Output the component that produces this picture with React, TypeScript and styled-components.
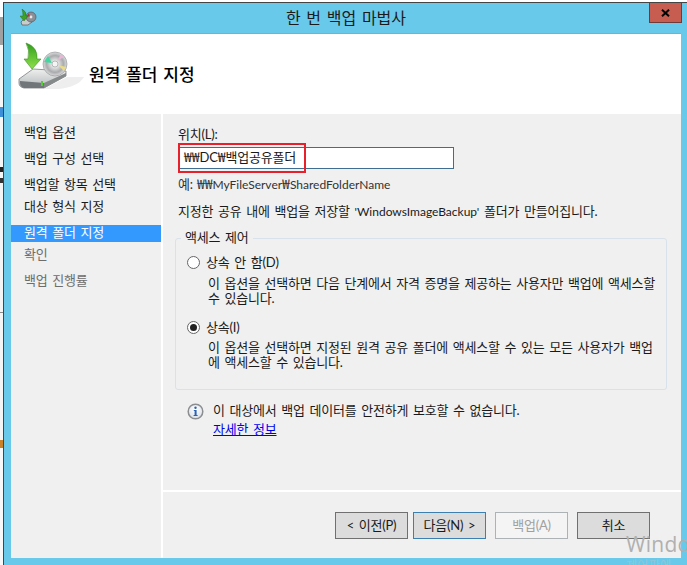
import * as React from 'react';
import styled, { createGlobalStyle } from 'styled-components';

const GlobalStyle = createGlobalStyle`
  html, body {
    margin: 0;
    padding: 0;
    background: #fff;
  }
  * { box-sizing: border-box; }
`;

const NAV_ITEMS = [
  { label: '백업 옵션', gap: 0 },
  { label: '백업 구성 선택', gap: 9 },
  { label: '백업할 항목 선택', gap: 9 },
  { label: '대상 형식 지정', gap: 5 },
  { label: '원격 폴더 지정', gap: 9, active: true },
  { label: '확인', gap: 5, muted: true },
  { label: '백업 진행률', gap: 9, muted: true },
];

const DiskIcon = () => (
  <svg width="68" height="52" viewBox="0 0 68 52">
    <defs>
      <linearGradient id="disk-top" x1="0" y1="0" x2="0" y2="1">
        <stop offset="0" stopColor="#eef0f0" />
        <stop offset="1" stopColor="#b4b8b8" />
      </linearGradient>
      <linearGradient id="arrow" x1="0" y1="0" x2="0" y2="1">
        <stop offset="0" stopColor="#2f9e1c" />
        <stop offset="1" stopColor="#8fe04a" />
      </linearGradient>
      <radialGradient id="cd" cx="0.5" cy="0.5" r="0.5">
        <stop offset="0.2" stopColor="#f0f0f0" />
        <stop offset="0.7" stopColor="#a9abad" />
        <stop offset="1" stopColor="#dcdcde" />
      </radialGradient>
    </defs>
    <path d="M26 48 L49 36 H66 Q60 46 40 48 Z" fill="#eeeeee" />
    <path d="M1 38 L15 28 L48 30 V35 L26 47 H6 Q1 46 1 42 Z" fill="url(#disk-top)" stroke="#7b7f80" strokeWidth="0.8" />
    <path d="M2 40 L26 42 V47 H6 Q2 46 2 42 Z" fill="#70767a" />
    <path d="M26 42 L48 32 V35 L26 47 Z" fill="#85898a" />
    <rect x="23" y="40" width="2" height="5" fill="#52d030" />
    <circle cx="37" cy="23" r="12" fill="url(#cd)" stroke="#8c8e90" strokeWidth="0.6" />
    <path d="M26 21 L34 22 L30 15 Z" fill="#3fd9a0" />
    <path d="M40 24 L48 26 L46 30 Z" fill="#eadb8a" />
    <path d="M39 20 L46 16 L43 13 Z" fill="#e6b8d6" />
    <circle cx="37" cy="23" r="3" fill="#f4f4f4" stroke="#909294" strokeWidth="0.6" />
    <path d="M8 2 Q20 6 19 18 L23 18 L14 28 L6 18 L10 18 Q12 9 8 2 Z" fill="url(#arrow)" stroke="#3d8f22" strokeWidth="0.6" />
  </svg>
);

const SmallAppIcon = () => (
  <svg width="17" height="17" viewBox="0 0 17 17">
    <path d="M1 13 L5 9 H12 V13 L8 16 H2 Z" fill="#c9cccc" stroke="#55595a" strokeWidth="0.7" />
    <circle cx="11" cy="8" r="5" fill="#8d8f96" stroke="#4c4e55" strokeWidth="0.6" />
    <path d="M7 7 L10 8 L9 4 Z" fill="#a23a3a" />
    <circle cx="11" cy="8" r="1.4" fill="#e8e8e8" />
    <path d="M2 0 Q7 3 6 7 L8 7 L4 12 L0 7 L3 7 Q3 3 2 0 Z" fill="#3ca324" stroke="#1f5f14" strokeWidth="0.4" />
  </svg>
);

const InfoIcon = () => (
  <svg width="17" height="17" viewBox="0 0 17 17">
    <defs>
      <radialGradient id="info-fill" cx="0.5" cy="0.35" r="0.7">
        <stop offset="0" stopColor="#ffffff" />
        <stop offset="1" stopColor="#d6dde8" />
      </radialGradient>
    </defs>
    <circle cx="8.5" cy="8.5" r="7.3" fill="url(#info-fill)" stroke="#8b8d8f" strokeWidth="1.5" />
    <circle cx="8.5" cy="4.8" r="1.2" fill="#2b62b4" />
    <path d="M6.8 7 H9.6 V12 H10.6 V13 H6.6 V12 H7.6 V8 H6.8 Z" fill="#2b62b4" />
  </svg>
);

const CloseGlyph = () => (
  <svg width="9" height="8" viewBox="0 0 9 8">
    <path d="M1 0.8 L8 7.2 M8 0.8 L1 7.2" stroke="#000" strokeWidth="2" fill="none" />
  </svg>
);

const Radio: React.FC<{ checked?: boolean }> = ({ checked }) => (
  <RadioRing>{checked && <RadioDot />}</RadioRing>
);

export default function App() {
  return (
    <>
      <GlobalStyle />
      <Screen>
        <DesktopSliver />
        <Wizard>
          <TitleBar>
            <TitleIcon>
              <SmallAppIcon />
            </TitleIcon>
            <Title>한 번 백업 마법사</Title>
            <CloseButton>
              <CloseGlyph />
            </CloseButton>
          </TitleBar>
          <Client>
            <Banner>
              <BannerIcon>
                <DiskIcon />
              </BannerIcon>
              <BannerTitle>원격 폴더 지정</BannerTitle>
            </Banner>
            <Main>
              <Nav>
                {NAV_ITEMS.map((item) => (
                  <NavItem key={item.label} $gap={item.gap} $active={item.active} $muted={item.muted}>
                    {item.label}
                  </NavItem>
                ))}
              </Nav>
              <Panel>
                <Form>
                  <FieldLabel>위치(L):</FieldLabel>
                  <PathBox>
                    <Won>₩₩</Won>DC<Won>₩</Won>백업공유폴더
                  </PathBox>
                  <HighlightBox />
                  <Hint>
                    예: <Won>₩₩</Won>
                    <Latin>MyFileServer</Latin>
                    <Won>₩</Won>
                    <Latin>SharedFolderName</Latin>
                  </Hint>
                  <Notice>
                    지정한 공유 내에 백업을 저장할 <Latin>'WindowsImageBackup'</Latin> 폴더가 만들어집니다.
                  </Notice>
                  <Group>
                    <Legend>액세스 제어</Legend>
                    <Option>
                      <Radio />
                      <OptionLabel>상속 안 함(D)</OptionLabel>
                    </Option>
                    <OptionText>
                      이 옵션을 선택하면 다음 단계에서 자격 증명을 제공하는 사용자만 백업에 액세스할
                      <br />수 있습니다.
                    </OptionText>
                    <Option $second>
                      <Radio checked />
                      <OptionLabel>상속(I)</OptionLabel>
                    </Option>
                    <OptionText $tight>
                      이 옵션을 선택하면 지정된 원격 공유 폴더에 액세스할 수 있는 모든 사용자가 백업
                      <br />에 액세스할 수 있습니다.
                    </OptionText>
                  </Group>
                  <Warning>
                    <InfoIcon />
                    <WarningText>
                      <div>이 대상에서 백업 데이터를 안전하게 보호할 수 없습니다.</div>
                      <MoreLink>자세한 정보</MoreLink>
                    </WarningText>
                  </Warning>
                </Form>
                <Footer>
                  <PushButton $variant="plain">&lt; 이전(P)</PushButton>
                  <PushButton $variant="default">다음(N) &gt;</PushButton>
                  <PushButton $variant="disabled" $gapLeft={9}>백업(A)</PushButton>
                  <PushButton $variant="plain" $gapLeft={9}>취소</PushButton>
                </Footer>
              </Panel>
            </Main>
          </Client>
        </Wizard>
        <Watermark>
          Windo
          <WatermarkSub>제어판에</WatermarkSub>
        </Watermark>
      </Screen>
    </>
  );
}

const FONT = `Lato, "Noto Sans CJK KR", sans-serif`;

const Screen = styled.div`
  position: relative;
  display: flex;
  width: 687px;
  height: 565px;
  overflow: hidden;
  padding-top: 2px;
  font-family: ${FONT};
  font-size: 13px;
  letter-spacing: -0.2px;
  word-spacing: 1.6px;
  color: #1a1a1a;
`;

const Won = styled.span`
  font-family: "Noto Sans CJK KR", sans-serif;
  font-size: 14px;
  letter-spacing: 0;
`;

const Latin = styled.span`
  font-size: 12px;
  letter-spacing: 0;
`;

const DesktopSliver = styled.div`
  width: 3px;
  background: linear-gradient(
    #ffffff 0 15px,
    #a0a0a0 15px 43px,
    #f6f6f6 43px 105px,
    #3f8fd8 105px 115px,
    #f6f6f6 115px 165px,
    #222 165px 170px,
    #f6f6f6 170px 176px,
    #333 176px 181px,
    #f4f4f4 181px 310px,
    #8a8a8a 310px 311px,
    #f4f4f4 311px 438px,
    #c9822a 438px 446px,
    #f8f8f8 446px
  );
`;

const Wizard = styled.div`
  flex: 1;
  display: flex;
  flex-direction: column;
  background: #69c9ea;
  border-top: 1px solid #444;
  border-left: 1px solid #444;
  padding: 0 6px 7px 7px;
`;

const TitleBar = styled.div`
  position: relative;
  height: 30px;
  display: flex;
  align-items: center;
  justify-content: center;
  flex-shrink: 0;
`;

const TitleIcon = styled.div`
  position: absolute;
  left: 9px;
  top: 6px;
  display: flex;
`;

const Title = styled.div`
  font-size: 16px;
  letter-spacing: 0;
  color: #1b1b1b;
  margin-top: -3px;
`;

const CloseButton = styled.div`
  position: absolute;
  right: -1px;
  top: 0;
  width: 33px;
  height: 20px;
  display: flex;
  align-items: center;
  justify-content: center;
  background: #c75c50;
  border: 1px solid #6e3a3a;
  border-top: none;
`;

const Client = styled.div`
  flex: 1;
  display: flex;
  flex-direction: column;
  min-height: 0;
  border-top: 1px solid #86aac2;
`;

const Banner = styled.div`
  height: 80px;
  flex-shrink: 0;
  display: flex;
  align-items: center;
  background: #fff;
  padding-left: 7px;
`;

const BannerIcon = styled.div`
  display: flex;
  margin-top: -14px;
`;

const BannerTitle = styled.div`
  margin-left: 3px;
  margin-top: -2px;
  font-size: 17px;
  letter-spacing: 0;
  font-weight: 500;
  color: #000;
`;

const Main = styled.div`
  flex: 1;
  display: flex;
  min-height: 0;
  background: #f0f0f0;
`;

const Nav = styled.nav`
  width: 150px;
  flex-shrink: 0;
  padding-top: 11px;
`;

const NavItem = styled.div<{ $gap: number; $active?: boolean; $muted?: boolean }>`
  height: 17px;
  line-height: 15px;
  margin-top: ${({ $gap }) => $gap}px;
  padding-left: 13px;
  background: ${({ $active }) => ($active ? '#3399ff' : 'transparent')};
  color: ${({ $active, $muted }) => ($active ? '#fff' : $muted ? '#6d6d6d' : '#1a1a1a')};
`;

const Panel = styled.div`
  flex: 1;
  display: flex;
  flex-direction: column;
  border-left: 2px solid #fff;
  min-width: 0;
`;

const Form = styled.div`
  position: relative;
  flex: 1;
  padding: 12px 14px 0 12px;
  min-height: 0;
`;

const FieldLabel = styled.div`
  margin-left: 3px;
  line-height: 17px;
`;

const PathBox = styled.div`
  width: 276px;
  height: 22px;
  margin: 4px 0 0 3px;
  padding-left: 5px;
  line-height: 17px;
  background: #fff;
  border: 1px solid #3f6e91;
`;

const HighlightBox = styled.div`
  position: absolute;
  left: 15px;
  top: 29px;
  width: 128px;
  height: 30px;
  border: 2px solid #e8202c;
`;

const Hint = styled.div`
  margin: 6px 0 0 3px;
  height: 17px;
  line-height: 17px;
  word-spacing: 1px;
  color: #333;
`;

const Notice = styled.div`
  margin: 11px 0 0 3px;
  height: 17px;
  line-height: 17px;
  white-space: nowrap;
`;

const Group = styled.div`
  position: relative;
  height: 152px;
  margin-top: 18px;
  padding: 15px 0 0 11px;
  border: 1px solid #d9e2ea;
  border-radius: 3px;
`;

const Legend = styled.div`
  position: absolute;
  left: 5px;
  top: -10px;
  padding: 0 4px;
  line-height: 17px;
  background: #f0f0f0;
`;

const Option = styled.div<{ $second?: boolean }>`
  display: flex;
  align-items: center;
  height: 17px;
  margin-top: ${({ $second }) => ($second ? 13 : 0)}px;
`;

const RadioRing = styled.span`
  width: 13px;
  height: 13px;
  flex-shrink: 0;
  display: flex;
  align-items: center;
  justify-content: center;
  background: #fff;
  border: 1px solid #666;
  border-radius: 50%;
`;

const RadioDot = styled.span`
  width: 7px;
  height: 7px;
  border-radius: 50%;
  background: #222;
`;

const OptionLabel = styled.span`
  margin-left: 6px;
  line-height: 17px;
`;

const OptionText = styled.div<{ $tight?: boolean }>`
  margin: ${({ $tight }) => ($tight ? 4 : 5)}px 0 0 21px;
  line-height: 15px;
  white-space: nowrap;
`;

const Warning = styled.div`
  display: flex;
  align-items: flex-start;
  margin: 12px 0 0 12px;
  padding-top: 1px;
`;

const WarningText = styled.div`
  margin-left: 9px;
  line-height: 19px;
  margin-top: -2px;
`;

const MoreLink = styled.a`
  display: inline-block;
  color: #0000ee;
  text-decoration: underline;
`;

const Footer = styled.div`
  height: 68px;
  flex-shrink: 0;
  display: flex;
  padding: 20px 0 0 172px;
  gap: 5px;
  border-top: 2px solid #fff;
`;

const BUTTON_COLORS = {
  plain: { border: '#707070', background: '#dcdcdc', color: '#1a1a1a' },
  default: { border: '#3c7fb1', background: '#dcdcdc', color: '#1a1a1a' },
  disabled: { border: '#adb2b5', background: '#f4f4f4', color: '#a0a0a0' },
};

const PushButton = styled.div<{ $variant: keyof typeof BUTTON_COLORS; $gapLeft?: number }>`
  width: 73px;
  height: 27px;
  margin-left: ${({ $gapLeft }) => ($gapLeft ? $gapLeft - 5 : 0)}px;
  padding-bottom: 2px;
  display: flex;
  align-items: center;
  justify-content: center;
  border: 1px solid ${({ $variant }) => BUTTON_COLORS[$variant].border};
  background: ${({ $variant }) => BUTTON_COLORS[$variant].background};
  color: ${({ $variant }) => BUTTON_COLORS[$variant].color};
`;

const Watermark = styled.div`
  position: absolute;
  left: 626px;
  top: 530px;
  font-family: "Open Sans", sans-serif;
  font-size: 21px;
  line-height: 29px;
  letter-spacing: 0.3px;
  color: #b0b0b0;
  white-space: nowrap;
`;

const WatermarkSub = styled.div`
  font-family: ${FONT};
  font-size: 12px;
  line-height: 14px;
  color: #8fc6d8;
`;
